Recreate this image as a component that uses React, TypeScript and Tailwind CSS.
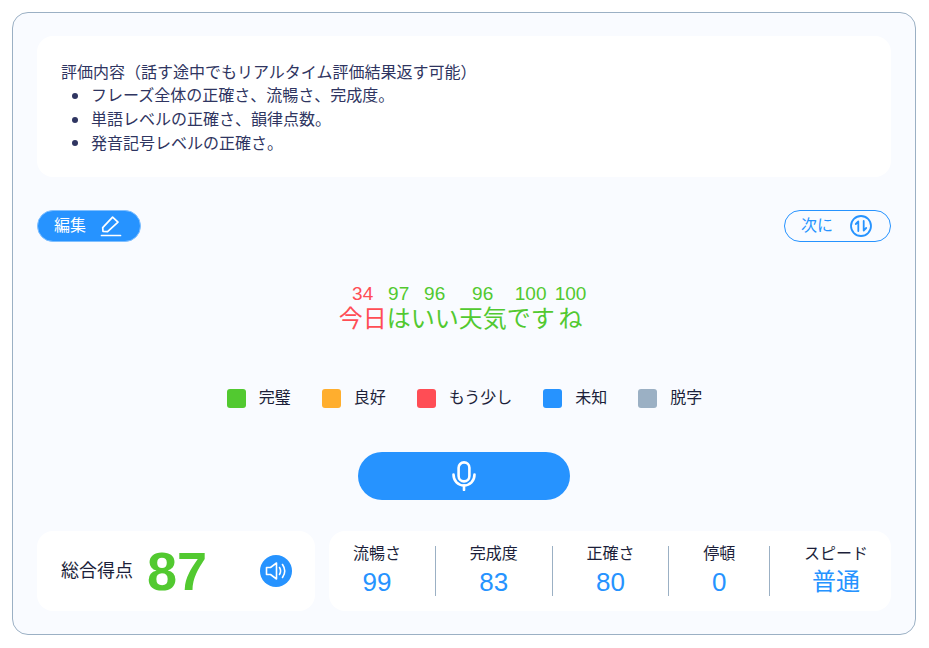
const legend = [
  { label: '完璧', color: 'bg-[#52c930]' },
  { label: '良好', color: 'bg-[#ffae2e]' },
  { label: 'もう少し', color: 'bg-[#ff4d55]' },
  { label: '未知', color: 'bg-[#2693ff]' },
  { label: '脱字', color: 'bg-[#9bb0c4]' },
]

const words = [
  { score: '34', text: '今日', color: 'text-[#ff4d55]' },
  { score: '97', text: 'は', color: 'text-[#52c930]' },
  { score: '96', text: 'いい', color: 'text-[#52c930]' },
  { score: '96', text: '天気', color: 'text-[#52c930]' },
  { score: '100', text: 'です', color: 'text-[#52c930]' },
  { score: '100', text: 'ね', color: 'text-[#52c930]' },
]

const criteria = ['フレーズ全体の正確さ、流暢さ、完成度。', '単語レベルの正確さ、韻律点数。', '発音記号レベルの正確さ。']

const stats = [
  { label: '流暢さ', value: '99', size: 'text-[26px]' },
  { label: '完成度', value: '83', size: 'text-[26px]' },
  { label: '正確さ', value: '80', size: 'text-[26px]' },
  { label: '停頓', value: '0', size: 'text-[26px]' },
  { label: 'スピード', value: '普通', size: 'text-2xl' },
]

function PenIcon() {
  return (
    <svg width="22" height="22" viewBox="0 0 22 22" fill="none" stroke="currentColor" strokeWidth="1.7" strokeLinejoin="round">
      <path d="M3 16.5 L2.7 12.6 L12.6 2.2 L18 7.2 L7.6 16.6 Z" />
      <path d="M1.5 20.5 H20.5" strokeLinecap="round" />
    </svg>
  )
}

function SwapIcon() {
  return (
    <svg width="22" height="22" viewBox="0 0 22 22" fill="none" stroke="currentColor" strokeWidth="1.8" strokeLinecap="round" strokeLinejoin="round">
      <circle cx="11" cy="11" r="10" />
      <path d="M8.3 16 V6.5 L5.8 9" />
      <path d="M13.7 6 V15.5 L16.2 13" />
    </svg>
  )
}

function MicIcon() {
  return (
    <svg width="24" height="30" viewBox="0 0 24 30" fill="none" stroke="currentColor" strokeWidth="2.6" strokeLinecap="round">
      <rect x="6.6" y="1.4" width="10.8" height="19" rx="5.4" />
      <path d="M1.5 13.5 C1.5 20 6 24.5 12 24.5 C18 24.5 22.5 20 22.5 13.5" />
      <path d="M12 24.5 V29" />
    </svg>
  )
}

function SpeakerIcon() {
  return (
    <svg width="22" height="20" viewBox="0 0 22 20" fill="none" stroke="currentColor" strokeWidth="1.6" strokeLinecap="round" strokeLinejoin="round">
      <path d="M1.5 6.5 H5.5 L11.5 2 V18 L5.5 13.5 H1.5 Z" />
      <path d="M14.5 6.5 C15.8 8.6 15.8 11.4 14.5 13.5" />
      <path d="M17.5 3.5 C20.2 7.4 20.2 12.6 17.5 16.5" />
    </svg>
  )
}

function App() {
  return (
    <div className="pl-3 pr-[13px] pt-3 font-['Liberation_Sans','Noto_Sans_CJK_JP',sans-serif]">
      <div className="h-[623px] border border-[#9bb0c4] rounded-2xl bg-[#f9fbff] px-6 pt-[23px] flex flex-col">
        <div className="h-[141px] bg-white rounded-2xl px-6 pt-[24.5px] text-base leading-[23.7px] text-[#2f3561]">
          <div>評価内容（話す途中でもリアルタイム評価結果返す可能）</div>
          <ul>
            {criteria.map((c) => (
              <li key={c} className="flex items-center">
                <span className="ml-[11px] mr-[13px] w-[6px] h-[6px] rounded-full bg-current" />
                <span>{c}</span>
              </li>
            ))}
          </ul>
        </div>

        <div className="mt-[33px] flex justify-between items-center">
          <button className="w-[104px] h-8 rounded-full bg-[#2693ff] border border-[#7fbfff] text-white text-base flex items-center pl-4 gap-[14px]">
            <span>編集</span>
            <PenIcon />
          </button>
          <button className="w-[107px] h-8 rounded-full border border-[#2693ff] text-[#2693ff] text-base flex items-center pl-4 gap-[17px]">
            <span>次に</span>
            <SwapIcon />
          </button>
        </div>

        <div className="mt-[40px] pr-[3px] flex justify-center">
          {words.map((w, i) => (
            <div key={i} className={`flex flex-col items-center ${w.color}`}>
              <span className="text-[19px] leading-[23px]">{w.score}</span>
              <span className="text-2xl leading-[28px]">{w.text}</span>
            </div>
          ))}
        </div>

        <div className="mt-[55px] pl-px flex justify-center gap-[31px] text-base leading-[20px] text-[#1c1f3a]">
          {legend.map((l) => (
            <div key={l.label} className="flex items-center gap-[13px]">
              <span className={`w-[19px] h-[19px] rounded-[3px] ${l.color}`} />
              <span>{l.label}</span>
            </div>
          ))}
        </div>

        <button className="mt-[44px] self-center w-[212px] h-12 rounded-full bg-[#2693ff] text-white flex items-center justify-center">
          <MicIcon />
        </button>

        <div className="mt-[31px] flex gap-[14px]">
          <div className="w-[278px] h-20 bg-white rounded-2xl pl-6 pr-[23px] flex items-center">
            <span className="text-lg text-[#1c1f3a]">総合得点</span>
            <span className="ml-[14px] text-[54px] leading-none font-bold text-[#52c930]">87</span>
            <span className="ml-auto w-8 h-8 rounded-full bg-[#2693ff] text-white flex items-center justify-center">
              <SpeakerIcon />
            </span>
          </div>
          <div className="flex-1 h-20 bg-white rounded-2xl pl-6 pr-[23px] flex items-center justify-between">
            {stats.map((s, i) => (
              <div key={s.label} className="contents">
                {i > 0 && <span className="w-px h-[50px] bg-[#9bb0c4]" />}
                <div className="flex flex-col items-center">
                  <span className="text-base leading-[22px] text-[#1c1f3a]">{s.label}</span>
                  <span className={`${s.size} leading-[34px] text-[#2693ff]`}>{s.value}</span>
                </div>
              </div>
            ))}
          </div>
        </div>
      </div>
    </div>
  )
}

export default App
